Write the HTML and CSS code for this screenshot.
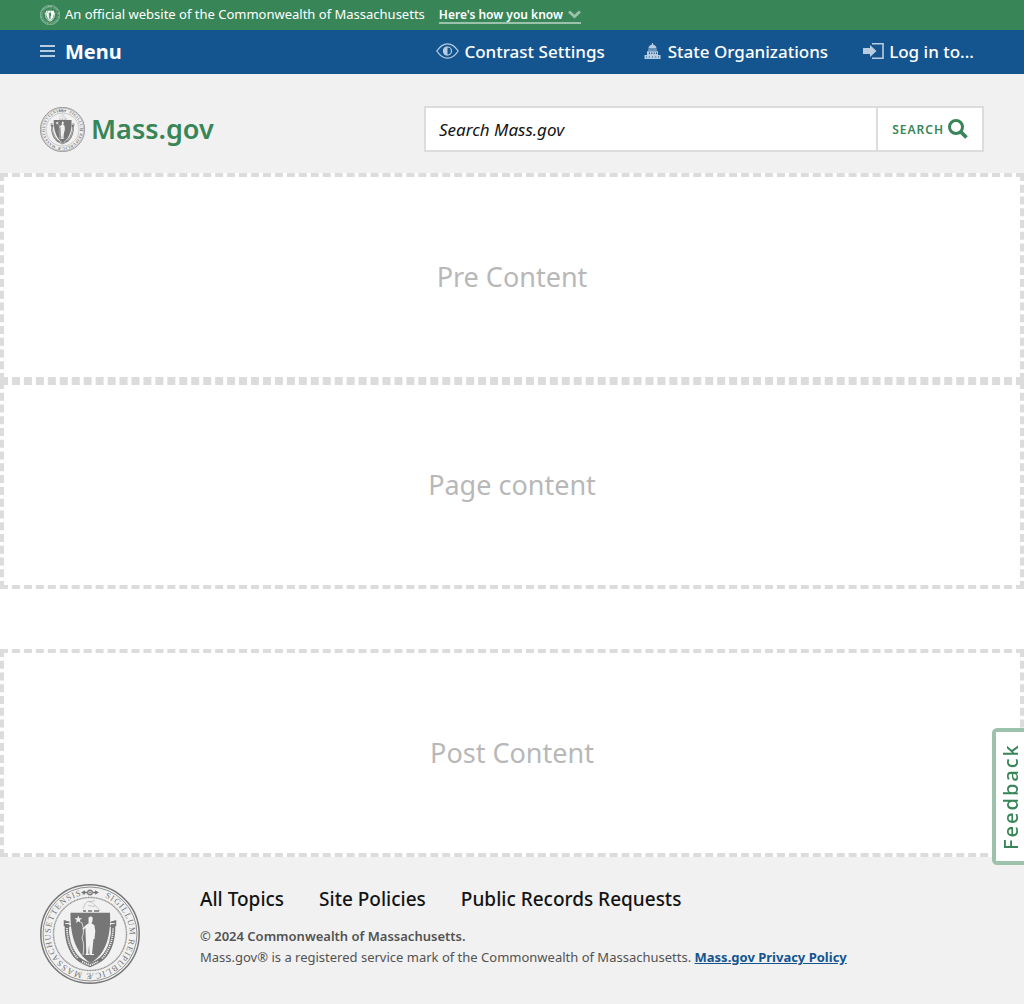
FILE: index.html
```html
<!DOCTYPE html>
<html lang="en">
<head>
<meta charset="utf-8">
<meta name="viewport" content="width=device-width, initial-scale=1">
<title>Mass.gov</title>
<link rel="stylesheet" href="styles.css">
</head>
<body>
<svg class="sprite" aria-hidden="true">
  <defs>
    <path id="seal-ring" d="M50 10.500A39.500 39.500 0 0 1 50 89.500A39.500 39.500 0 0 1 50 10.500"/>
    <symbol id="seal" viewBox="0 0 100 100">
      <g fill="none" stroke="currentColor">
        <circle cx="50" cy="50" r="49.200" stroke-width="1.500"/>
        <circle cx="50" cy="50" r="47" stroke-width=".8"/>
        <circle cx="50" cy="50" r="36.500" stroke-width="1.400" stroke-dasharray="1.200 .4" opacity=".75"/>
        <path d="M27 40C26 52 29 66 38 74.500C42 78 46 79.500 50 81C54 79.500 58 78 62 74.500C71 66 74 52 73 40" stroke-width="4.200"/>
        <path class="seal-motto" d="M27 44C27 54 30 66 38 74.500M42 77.500C45 79 47 80 50 81C53 80 55 79 58 77.500M62 74.500C70 66 73 54 73 44" stroke-width="1.800" stroke-dasharray="1.200 .9"/>
        <path d="M30.500 42l-6-.5v-4.500l5 1.500M69.500 42l6-.5v-4.500l-5 1.500" stroke-width="1.500"/>
        <path d="M43 25c2-3 1-6 5-7.500 4-1 5 3 8 4.500l4 5M49 18l6-1.500m-7 5l7 1" stroke-width="1" opacity=".35"/>
        <path d="M43 27h3m2 0h4m2 0h5" stroke-width="1.300"/>
        <path d="M43 8.500h4m6 0h4" stroke-width="1.500"/>
        <circle cx="50" cy="8.500" r="2.300" stroke-width="1.300"/>
      </g>
      <path fill="currentColor" d="M30.500 28.700h39.500c1 21-3 41-19.500 50.300C35 69 30 49 30.500 28.700zM41 8.500l4-2.200v4.400zm18 0l-4-2.200v4.400z"/>
      <circle cx="50" cy="8.500" r=".9" fill="currentColor"/>
      <g class="seal-figure">
        <path d="M38.300 31.500l1 2.700 2.900.1-2.300 1.800.8 2.800-2.400-1.600-2.400 1.600.8-2.800-2.300-1.800 2.900-.1z"/>
        <path d="M48.500 33.500l2.500-1.200 1.800 1.500-.5 4-1 1.500 3 1.700 1 6-.8 8h-1l-.5 5-1 10h2v1h-4.500l-.4-10-.8 8 1 2h-4l1-2-.4-12-.3-7-.2-6-2.500 2-.5-1.300 3.700-3.700 2.500-1.700z"/>
        <path d="M41.500 38c2 5 3 9 .5 16 2 5 2 10 1 17" fill="none" stroke="currentColor" stroke-width=".8"/>
      </g>
      <text class="seal-text" font-size="8.500"><textPath href="#seal-ring" startOffset="15">SIGILLUM REIPUBLICÆ MASSACHUSETTENSIS.</textPath></text>
    </symbol>
  </defs>
</svg>

<div class="banner">
  <svg class="banner-seal" aria-hidden="true"><use href="#seal"/></svg>
  <span class="banner-text">An official website of the Commonwealth of Massachusetts</span>
  <button class="banner-toggle" type="button">Here's how you know
    <svg width="13" height="9" viewBox="0 0 13 9" aria-hidden="true"><path d="M1 1.500l5.500 5 5.500-5" fill="none" stroke="currentColor" stroke-width="2.800"/></svg>
  </button>
</div>

<nav class="nav" aria-label="Main">
  <button class="menu-button" type="button">
    <svg width="15" height="12" viewBox="0 0 15 12" aria-hidden="true"><path d="M0 1h15M0 6h15M0 11h15" stroke="currentColor" stroke-width="2"/></svg>
    <span>Menu</span>
  </button>
  <div class="utility">
    <button class="utility-item contrast" type="button">
      <svg width="23" height="16" viewBox="0 0 23 16" aria-hidden="true"><path d="M.8 8C4 3.200 7.500.8 11.500.8S19 3.200 22.200 8c-3.200 4.800-6.700 7.200-10.700 7.200S4 12.800.8 8z" fill="none" stroke="currentColor" stroke-width="1.300"/><circle cx="11.500" cy="8" r="4" fill="none" stroke="currentColor" stroke-width="1.200"/><path d="M11.500 3.500a4.500 4.500 0 0 0 0 9z" fill="currentColor"/></svg>
      <span>Contrast Settings</span>
    </button>
    <button class="utility-item orgs" type="button">
      <svg width="17" height="16" viewBox="0 0 17 16" fill="currentColor" aria-hidden="true"><path fill-rule="evenodd" d="M8 0h1v1.500c2 .4 3.500 2 3.600 4H4.400c.1-2 1.600-3.600 3.600-4zM4 6.500h9v1H4zM3 8.200h11V12h2.500v4H.5v-4H3zM5 9.500V11h1V9.500zm2.300 0V11h1V9.500zm2.400 0V11h1V9.500zm2.300 0V11h1V9.500zM2 13.400v1.200h1v-1.200zm2.800 0v1.200h1v-1.200zm3.200 0v1.200h1v-1.200zm3.200 0v1.200h1v-1.200zm2.800 0v1.200h1v-1.200z"/></svg>
      <span>State Organizations</span>
    </button>
    <button class="utility-item login" type="button">
      <svg width="21" height="16" viewBox="0 0 21 16" aria-hidden="true"><path d="M0 5h7V2l6.500 6L7 14v-3H0z" fill="currentColor"/><path d="M9 .8h11v14.400H9" fill="none" stroke="currentColor" stroke-width="1.600"/></svg>
      <span>Log in to...</span>
    </button>
  </div>
</nav>

<header class="header">
  <a class="logo" href="#"><svg class="logo-seal" aria-hidden="true"><use href="#seal"/></svg><span>Mass.gov</span></a>
  <form class="search" role="search">
    <input class="search-input" type="search" placeholder="Search Mass.gov" aria-label="Search Mass.gov">
    <button class="search-button" type="submit"><span>SEARCH</span>
      <svg width="20" height="20" viewBox="0 0 20 20" aria-hidden="true"><circle cx="8" cy="8" r="6.500" fill="none" stroke="currentColor" stroke-width="3"/><path d="M12.500 12.500l6 6" stroke="currentColor" stroke-width="3.800"/></svg>
    </button>
  </form>
</header>

<main>
  <div class="region">Pre Content</div>
  <div class="region">Page content</div>
  <div class="region region-post">Post Content</div>
</main>

<footer class="footer">
  <svg class="footer-seal" role="img" aria-label="Massachusetts state seal"><use href="#seal"/></svg>
  <div class="footer-body">
    <nav class="footer-links" aria-label="Footer">
      <a href="#">All Topics</a>
      <a href="#">Site Policies</a>
      <a href="#">Public Records Requests</a>
    </nav>
    <div class="legal">
      <p class="copyright">© 2024 Commonwealth of Massachusetts.</p>
      <p>Mass.gov® is a registered service mark of the Commonwealth of Massachusetts. <a href="#">Mass.gov Privacy Policy</a></p>
    </div>
  </div>
</footer>

<button class="feedback" type="button">Feedback</button>
</body>
</html>
```
FILE: styles.css
```css
* { box-sizing: border-box; }

body {
  margin: 0;
  background: #fff;
  color: #141414;
  font-family: "Noto Sans", "Open Sans", sans-serif;
}

button {
  padding: 0;
  border: 0;
  background: none;
  color: inherit;
  font: inherit;
  cursor: pointer;
}

p { margin: 0; }
svg { flex: none; }

.sprite { position: absolute; width: 0; height: 0; }

.seal-text {
  font-family: "Liberation Serif", serif;
  letter-spacing: 1px;
  fill: currentColor;
}

.seal-figure { fill: var(--seal-ground, #f1f1f1); color: var(--seal-ground, #f1f1f1); }
.seal-motto { stroke: var(--seal-ground, #f1f1f1); }

.banner {
  display: flex;
  align-items: center;
  height: 30px;
  padding: 0 40px;
  background: #388557;
  color: #fff;
  font-size: 13px;
  line-height: 18px;
}

.banner-seal {
  --seal-ground: #388557;
  width: 20px;
  height: 20px;
  margin-right: 5px;
}

.banner-text { padding-bottom: 2px; }

.banner-toggle {
  display: flex;
  align-items: center;
  gap: 5px;
  margin: 1px 0 0 14px;
  border-bottom: 2px solid #9cc2ab;
  font-size: 12px;
  font-weight: 600;
  line-height: 15px;
}

.banner-toggle svg { color: #9cc2ab; }

.nav {
  display: flex;
  align-items: center;
  justify-content: space-between;
  height: 44px;
  padding: 0 50px 2px 40px;
  background: #14558f;
  color: #fff;
}

.nav svg { color: #b9cce0; }

.menu-button {
  display: flex;
  align-items: center;
  gap: 10px;
  font-size: 20px;
  font-weight: 700;
}

.utility { display: flex; gap: 35px; }

.utility-item {
  display: flex;
  align-items: center;
  gap: 5px;
  font-size: 17px;
  font-weight: 500;
}

.contrast { margin-right: 4px; }
.orgs { gap: 7px; }

.header {
  display: flex;
  align-items: center;
  justify-content: space-between;
  padding: 32px 40px 21px;
  background: #f1f1f1;
}

.logo {
  display: flex;
  align-items: center;
  gap: 6px;
  color: #388557;
  font-size: 27px;
  font-weight: 600;
  line-height: 40px;
  text-decoration: none;
}

.logo-seal { width: 45px; height: 45px; color: #767676; }

.search {
  display: flex;
  width: 560px;
  height: 46px;
  border: 2px solid #dcdcdc;
  background: #fff;
}

.search-input {
  flex: 1;
  min-width: 0;
  padding: 0 13px;
  border: 0;
  background: none;
  color: #141414;
  font: italic 17px "Noto Sans", sans-serif;
}

.search-input::placeholder { color: #141414; opacity: 1; }

.search-button {
  display: flex;
  align-items: center;
  gap: 4px;
  padding: 0 14px;
  border-left: 2px solid #dcdcdc;
  color: #388557;
  font-size: 12px;
  font-weight: 600;
  letter-spacing: 1px;
}

.region {
  display: flex;
  align-items: center;
  justify-content: center;
  height: 208px;
  padding-bottom: 2px;
  border: 4px dashed #dcdcdc;
  color: #b8b8b8;
  font-size: 27px;
}

.region-post { margin-top: 60px; }

.footer {
  display: flex;
  gap: 60px;
  padding: 27px 40px 20px;
  background: #f1f1f1;
}

.footer-seal { width: 100px; height: 100px; color: #767676; }

.footer-links {
  display: flex;
  flex-wrap: wrap;
  gap: 35px;
  font-size: 19px;
  font-weight: 500;
  line-height: 30px;
}

.footer-links a { color: #141414; text-decoration: none; }

.legal {
  margin-top: 12px;
  color: #535353;
  font-size: 13px;
  line-height: 21px;
}

.copyright { font-weight: 600; }

.legal a { color: #14558f; font-weight: 700; }

.feedback {
  position: fixed;
  right: 0;
  bottom: 139px;
  width: 32px;
  height: 137px;
  border: 4px solid #9cc2ab;
  border-left: 0;
  border-radius: 0 5px 5px 0;
  background: #fff;
  color: #388557;
  font-size: 20px;
  font-weight: 500;
  line-height: 30px;
  letter-spacing: 2px;
  writing-mode: vertical-rl;
  transform: rotate(180deg);
}
```
